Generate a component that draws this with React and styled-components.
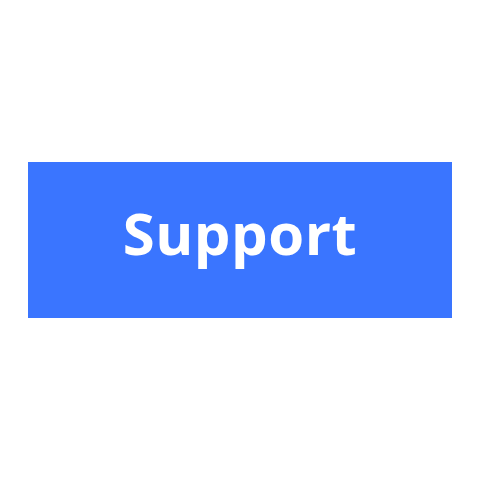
import React from "react";
import styled, { createGlobalStyle } from "styled-components";

const GlobalStyle = createGlobalStyle`
  html, body {
    margin: 0;
    padding: 0;
    background: #ffffff;
  }
`;

const Page = styled.div`
  width: 480px;
  height: 480px;
  padding: 162px 28px;
  box-sizing: border-box;
  display: flex;
`;

const Banner = styled.div`
  flex: 1;
  background: #3a75ff;
  display: flex;
  align-items: center;
  justify-content: center;
  padding-bottom: 14px;
  box-sizing: border-box;
`;

const Title = styled.h1`
  margin: 0;
  color: #ffffff;
  font-family: "Open Sans", "Liberation Sans", sans-serif;
  font-weight: 750;
  font-size: 58px;
  letter-spacing: 0.5px;
  line-height: 1;
`;

const App = () => {
  return (
    <>
      <GlobalStyle />
      <Page>
        <Banner>
          <Title>Support</Title>
        </Banner>
      </Page>
    </>
  );
};

export default App;
